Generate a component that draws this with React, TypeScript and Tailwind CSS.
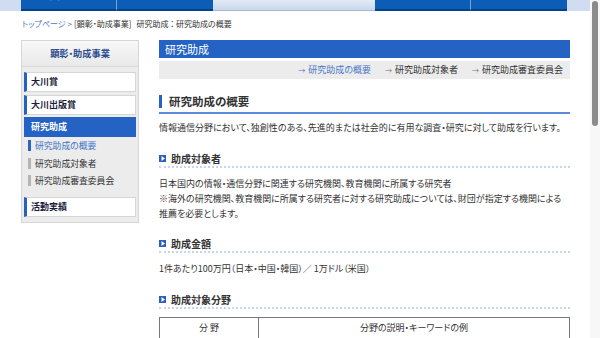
import React from "react";

const tabs = [
  { label: "財団について", w: "w-[96px]", active: false },
  { label: "情報通信研究", w: "w-[96px]", active: false },
  { label: "顕彰・助成事業", w: "w-[162px]", active: true },
  { label: "情報発信事業", w: "w-[96px]", active: false },
  { label: "お問い合わせ", w: "w-[96px]", active: false },
];

function SectionHead({ children }: { children: React.ReactNode }) {
  return (
    <div className="border-b-2 border-dotted border-[#c5d6ef] pb-[1px]">
      <div className="h-[14px] flex items-center gap-[5px]">
        <span className="w-[7px] h-[7px] bg-[#2b5fba] flex items-center justify-center">
          <svg width="4" height="5" viewBox="0 0 4 5">
            <path d="M0.5 0 L4 2.5 L0.5 5 Z" fill="#ffffff" />
          </svg>
        </span>
        <span className="text-[10px] font-bold text-[#333]">{children}</span>
      </div>
    </div>
  );
}

function SideItem({ children }: { children: React.ReactNode }) {
  return (
    <div className="h-[20px] bg-white border border-[#d6d6d6] border-l-[3px] border-l-[#2463c4] flex items-center pl-[4px]">
      <span className="text-[9px] font-bold text-[#1c1c3c]">{children}</span>
    </div>
  );
}

function SubItem({ children, active }: { children: React.ReactNode; active?: boolean }) {
  return (
    <div className="h-[17.5px] flex items-center pl-[4px]">
      <span className={`w-[3px] h-[11px] ${active ? "bg-[#2a63c6]" : "bg-[#b4b4b4]"}`} />
      <span className={`ml-[4px] text-[8.8px] ${active ? "text-[#4273c9]" : "text-[#333]"}`}>{children}</span>
    </div>
  );
}

function Arrow({ blue }: { blue?: boolean }) {
  return (
    <span className={`text-[7px] mr-[3px] ${blue ? "text-[#4a78c8]" : "text-[#777]"}`}>→</span>
  );
}

export default function App() {
  return (
    <div className="w-[600px] h-[338px] overflow-hidden flex items-start bg-white font-['Noto_Sans_CJK_JP','Noto_Sans',sans-serif] [font-feature-settings:'palt'] text-[#333]">
      <div className="w-[590px] shrink-0 flex flex-col">
        {/* top nav */}
        <div className="h-[11px] shrink-0 bg-[#cfdcf1] flex pl-[21px] overflow-hidden">
          {tabs.map((t, i) => (
            <div
              key={i}
              className={`${t.w} h-[11px] shrink-0 overflow-hidden flex justify-center items-start ${
                t.active
                  ? "bg-gradient-to-b from-[#e3eaf5] to-[#c9d7ec] border-b border-[#a5b8d4] text-[#2a4f9c]"
                  : "bg-[#0b5db6] border-b-2 border-[#08418b] text-white"
              } ${i === 0 || i === 3 ? "border-r border-r-[#7fa3d6]" : ""}`}
            >
              <span className="text-[10px] leading-[14px] -mt-[12px]">{t.label}</span>
            </div>
          ))}
        </div>

        {/* breadcrumb */}
        <div className="mt-[6px] h-[14px] shrink-0 pl-[22px] flex items-center text-[8px] text-[#333] whitespace-nowrap">
          <span className="text-[#4a78c8]">トップページ</span>
          <span className="mx-[2px] text-[#666]">&gt;</span>
          <span>[顕彰・助成事業]</span>
          <span className="ml-[5px]">研究助成 ： 研究助成の概要</span>
        </div>

        <div className="mt-[9px] shrink-0 flex items-start">
          {/* sidebar */}
          <div className="ml-[21px] w-[118px] shrink-0 border border-[#d6d6d6] bg-[#ececec]">
            <div className="h-[26px] bg-gradient-to-b from-[#f8f8f8] to-[#e9e9e9] border-b border-[#d8d8d8] flex items-center justify-center">
              <span className="text-[9.2px] font-bold text-[#2b4c8f]">顕彰・助成事業</span>
            </div>
            <div className="px-[2px] pt-[5px] pb-[5px] flex flex-col">
              <SideItem>大川賞</SideItem>
              <div className="h-[3px]" />
              <SideItem>大川出版賞</SideItem>
              <div className="h-[2px]" />
              <div className="h-[20px] bg-[#2463c4] flex items-center pl-[7px]">
                <span className="text-[9px] font-bold text-white">研究助成</span>
              </div>
              <SubItem active>研究助成の概要</SubItem>
              <SubItem>研究助成対象者</SubItem>
              <SubItem>研究助成審査委員会</SubItem>
              <div className="h-[7px]" />
              <SideItem>活動実績</SideItem>
            </div>
          </div>

          {/* main */}
          <div className="ml-[20px] w-[411px] shrink-0 flex flex-col">
            <div className="h-[18px] shrink-0 bg-[#2463c4] flex items-center pl-[6px]">
              <span className="text-[11px] text-white">研究助成</span>
            </div>
            <div className="mt-[3px] h-[18px] shrink-0 bg-[#ececec] flex items-center justify-end pr-[7px] text-[9px] whitespace-nowrap">
              <Arrow blue />
              <span className="text-[#4a78c8]">研究助成の概要</span>
              <span className="w-[14px]" />
              <Arrow />
              <span>研究助成対象者</span>
              <span className="w-[14px]" />
              <Arrow />
              <span>研究助成審査委員会</span>
            </div>

            <div className="mt-[14px] shrink-0 border-b-2 border-[#5a8ad8] pb-[2px]">
              <div className="h-[17px] flex items-center">
                <span className="w-[3px] h-[13px] bg-[#2463c4]" />
                <span className="ml-[7px] text-[11.5px] font-bold text-[#333]">研究助成の概要</span>
              </div>
            </div>

            <p className="mt-[6px] text-[9px] leading-[15px] whitespace-nowrap">
              情報通信分野において、独創性のある、先進的または社会的に有用な調査・研究に対して助成を行います。
            </p>

            <div className="mt-[16px] shrink-0">
              <SectionHead>助成対象者</SectionHead>
            </div>
            <p className="mt-[8px] text-[9px] leading-[15px]">
              日本国内の情報・通信分野に関連する研究機関、教育機関に所属する研究者
              <br />
              ※海外の研究機関、教育機関に所属する研究者に対する研究助成については、財団が指定する機関による
              <br />
              推薦を必要とします。
            </p>

            <div className="mt-[15px] shrink-0">
              <SectionHead>助成金額</SectionHead>
            </div>
            <p className="mt-[8px] text-[9px] leading-[15px]">1件あたり100万円（日本・中国・韓国）／ 1万ドル（米国）</p>

            <div className="mt-[16px] shrink-0">
              <SectionHead>助成対象分野</SectionHead>
            </div>

            <table className="mt-[8px] w-full border-collapse text-[9px]">
              <tbody>
                <tr className="h-[21px]">
                  <td colSpan={2} className="w-[99px] border border-[#777] text-center">分 野</td>
                  <td className="border border-[#777] text-center">分野の説明・キーワードの例</td>
                </tr>
                <tr className="h-[20px]">
                  <td className="w-[27px] border border-[#777]"></td>
                  <td className="w-[72px] border border-[#777]"></td>
                  <td className="border border-[#777]"></td>
                </tr>
              </tbody>
            </table>
          </div>
        </div>
      </div>

      {/* scrollbar */}
      <div className="w-[10px] h-[338px] shrink-0 bg-[#f7f7f7] pl-[2px] pt-[1px]">
        <div className="w-[6px] h-[125px] rounded-[3px] bg-[#8b8b8b]" />
      </div>
    </div>
  );
}
